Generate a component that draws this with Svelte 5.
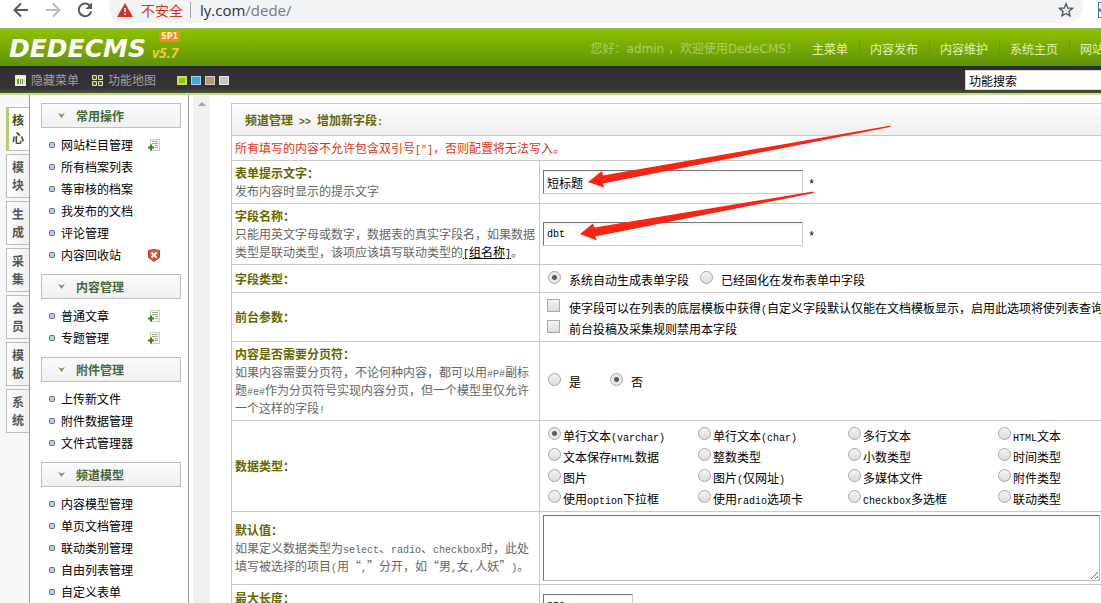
<script>
  const nav = ['主菜单', '内容发布', '内容维护', '系统主页', '网站主页'];
  const tabs = ['核心', '模块', '生成', '采集', '会员', '模板', '系统'];
  const swatches = ['#8fc31f', '#3fa9dc', '#b29a78', '#c4c8cc'];
  const groups = [
    {
      title: '常用操作',
      items: [
        { text: '网站栏目管理', icon: 'add' },
        { text: '所有档案列表' },
        { text: '等审核的档案' },
        { text: '我发布的文档' },
        { text: '评论管理' },
        { text: '内容回收站', icon: 'bin' }
      ]
    },
    {
      title: '内容管理',
      items: [
        { text: '普通文章', icon: 'add' },
        { text: '专题管理', icon: 'add' }
      ]
    },
    {
      title: '附件管理',
      items: [{ text: '上传新文件' }, { text: '附件数据管理' }, { text: '文件式管理器' }]
    },
    {
      title: '频道模型',
      items: [
        { text: '内容模型管理' },
        { text: '单页文档管理' },
        { text: '联动类别管理' },
        { text: '自由列表管理' },
        { text: '自定义表单' }
      ]
    }
  ];
  const dataTypes = [
    '单行文本(varchar)', '单行文本(char)', '多行文本', 'HTML文本',
    '文本保存HTML数据', '整数类型', '小数类型', '时间类型',
    '图片', '图片(仅网址)', '多媒体文件', '附件类型',
    '使用option下拉框', '使用radio选项卡', 'Checkbox多选框', '联动类型'
  ];
  let dataType = $state(0);

  // Latin runs are set in a half-width face beside the full-width characters.
  const runs = (text) =>
    (text.match(/[\x20-\x7e]+|[^\x20-\x7e]+/g) ?? []).map((t) => ({ t, latin: /^[\x20-\x7e]/.test(t) }));
</script>

{#snippet mixed(text)}{#each runs(text) as r}{#if r.latin}<span class="latin">{r.t}</span>{:else}{r.t}{/if}{/each}{/snippet}

<div class="page">
  <div class="browser">
    <button class="tool" aria-label="后退">
      <svg width="16" height="16" viewBox="0 0 16 16"><path d="M15 8H2M8 1.5L1.5 8L8 14.5" fill="none" stroke="#55585c" stroke-width="2" /></svg>
    </button>
    <button class="tool" aria-label="前进">
      <svg width="16" height="16" viewBox="0 0 16 16"><path d="M1 8H14M8 1.5L14.5 8L8 14.5" fill="none" stroke="#b9bbbe" stroke-width="2" /></svg>
    </button>
    <button class="tool" aria-label="刷新">
      <svg width="16" height="16" viewBox="0 0 16 16"><path d="M12.6 3.4A6.3 6.3 0 1 0 14.2 9.5" fill="none" stroke="#55585c" stroke-width="2" /><path d="M15 0.5V7H8.5Z" fill="#55585c" /></svg>
    </button>
    <div class="address">
      <svg width="16" height="14" viewBox="0 0 16 14"><path d="M8 0L16 14H0Z" fill="#d93025" /><path d="M7.2 5h1.6v4H7.2zM7.2 10.4h1.6V12H7.2z" fill="#fff" /></svg>
      <span class="unsafe">不安全</span>
      <span class="bar"></span>
      <span class="url">ly.com<span>/dede/</span></span>
      <svg class="star" width="16" height="16" viewBox="0 0 16 16"><path d="M8 1.8l1.8 4.2 4.6.4-3.5 3 1.1 4.5L8 11.5l-4 2.4 1.1-4.5-3.5-3 4.6-.4z" fill="none" stroke="#55585c" stroke-width="1.4" /></svg>
    </div>
    <svg class="ext" width="16" height="16" viewBox="0 0 16 16"><rect x="0.5" y="0.5" width="15" height="15" fill="#fff" stroke="#3a6ea5" /><path d="M1 7l5 5 7-8" fill="none" stroke="#3a6ea5" stroke-width="2" /></svg>
  </div>

  <header>
    <div class="logo">
      <span class="brand">DEDECMS</span>
      <span class="version">v5.7<span class="sp">SP1</span></span>
    </div>
    <div class="hello">您好：admin ，欢迎使用DedeCMS！</div>
    <nav>
      {#each nav as n}<a href="#top">{n}</a>{/each}
    </nav>
  </header>

  <div class="toolbar">
    <a href="#hide">
      <svg width="11" height="11" viewBox="0 0 11 11"><rect width="11" height="11" fill="#e4ecd2" /><path d="M1 2.5h9" stroke="#fff" /><path d="M2 4h2v5H2z" fill="#6c9a1c" /><path d="M5.5 4v5M7.5 4v5" stroke="#7c8a62" /></svg>
      隐藏菜单
    </a>
    <a href="#map">
      <svg width="11" height="11" viewBox="0 0 11 11"><path d="M.5 .5h4v4h-4zM6.500 .5h4v4h-4zM.5 6.500h4v4h-4zM6.500 6.500h4v4h-4z" fill="#4c6420" stroke="#dcebb4" /></svg>
      功能地图
    </a>
    <div class="swatches">
      {#each swatches as c, i}<button aria-label="配色{i + 1}" class:on={i === 0} style:background-color={c}></button>{/each}
    </div>
    <input class="search" aria-label="功能搜索" value="功能搜索" />
  </div>

  <div class="body">
    <div class="tabs">
      {#each tabs as t, i}
        <button class:active={i === 0}><span>{t}</span></button>
      {/each}
    </div>
    <aside>
      {#each groups as g}
        <section>
          <h2>
            <svg width="7" height="5" viewBox="0 0 7 5"><path d="M0 0l3.5 1.6L7 0L3.5 5Z" fill="#6f9c62" /></svg>
            {g.title}
          </h2>
          <ul>
            {#each g.items as item}
              <li>
                <svg width="6" height="6" viewBox="0 0 6 6"><rect x="0.5" y="0.5" width="5" height="5" rx="1" fill="#b9cdea" stroke="#56698f" /></svg>
                <a href="#item">{item.text}</a>
                {#if item.icon === 'add'}
                  <svg class="mark" width="12" height="12" viewBox="0 0 12 12"><rect x="2.5" y="0.5" width="9" height="11" fill="#f3f7ee" stroke="#c6d3ba" /><path d="M4 2.5h6M4 4.500h6M7 6.500h3M7 8.500h3" stroke="#9db38e" /><path d="M3 5.500v6M0 8.500h6" stroke="#3f7a2c" stroke-width="2" /></svg>
                {:else if item.icon === 'bin'}
                  <svg class="mark" width="12" height="13" viewBox="0 0 12 13"><path d="M.5 1.500L6 .5l5.500 1v7L6 12.500.5 8.500Z" fill="#d9553d" stroke="#b5402c" /><path d="M3.500 3.500l5 5M8.500 3.500l-5 5" stroke="#fff" stroke-width="2" /></svg>
                {/if}
              </li>
            {/each}
          </ul>
        </section>
      {/each}
    </aside>
    <div class="scroll">
      <svg width="8" height="4" viewBox="0 0 8 4"><path d="M4 0L8 4H0Z" fill="#a3a3a3" /></svg>
    </div>

    <main>
      <form onsubmit={(e) => e.preventDefault()}>
        <table>
          <tbody>
            <tr class="title"><th colspan="2">{@render mixed('频道管理 >> 增加新字段:')}</th></tr>
            <tr class="warn"><td colspan="2">{@render mixed('所有填写的内容不允许包含双引号["]，否则配置将无法写入。')}</td></tr>
            <tr>
              <td class="label"><label for="tip">表单提示文字：</label><p>发布内容时显示的提示文字</p></td>
              <td><div class="field"><input id="tip" class="text" value="短标题" /><span class="required">*</span></div></td>
            </tr>
            <tr class="name">
              <td class="label"><label for="fieldname">字段名称：</label><p>只能用英文字母或数字，数据表的真实字段名，如果数据类型是联动类型，该项应该填写联动类型的<a href="#group">{@render mixed('[组名称]')}</a>。</p></td>
              <td><div class="field"><input id="fieldname" class="text latin" value="dbt" /><span class="required">*</span></div></td>
            </tr>
            <tr class="kind">
              <td class="label"><b>字段类型：</b></td>
              <td>
                <div class="options">
                  <label><input type="radio" name="kind" checked />系统自动生成表单字段</label>
                  <label><input type="radio" name="kind" />已经固化在发布表单中字段</label>
                </div>
              </td>
            </tr>
            <tr class="front">
              <td class="label"><b>前台参数：</b></td>
              <td>
                <div class="options stack">
                  <label><input type="checkbox" /><span>{@render mixed('使字段可以在列表的底层模板中获得(自定义字段默认仅能在文档模板显示，启用此选项将使列表查询变慢)')}</span></label>
                  <label><input type="checkbox" />前台投稿及采集规则禁用本字段</label>
                </div>
              </td>
            </tr>
            <tr class="paging">
              <td class="label"><b>内容是否需要分页符：</b><p>{@render mixed('如果内容需要分页符，不论何种内容，都可以用#P#副标题#e#作为分页符号实现内容分页，但一个模型里仅允许一个这样的字段!')}</p></td>
              <td>
                <div class="options wide">
                  <label><input type="radio" name="paging" />是</label>
                  <label><input type="radio" name="paging" checked />否</label>
                </div>
              </td>
            </tr>
            <tr class="types">
              <td class="label"><b>数据类型：</b></td>
              <td>
                <div class="grid">
                  {#each dataTypes as t, i}
                    <label><input type="radio" name="datatype" value={i} bind:group={dataType} /><span>{@render mixed(t)}</span></label>
                  {/each}
                </div>
              </td>
            </tr>
            <tr class="default">
              <td class="label"><label for="default">默认值：</label><p>{@render mixed('如果定义数据类型为select、radio、checkbox时，此处填写被选择的项目(用“,”分开，如“男,女,人妖”)。')}</p></td>
              <td><textarea id="default"></textarea></td>
            </tr>
            <tr class="length">
              <td class="label"><label for="max">最大长度：</label></td>
              <td><input id="max" class="text short latin" value="250" /></td>
            </tr>
          </tbody>
        </table>
        <svg class="arrows" width="320" height="130" viewBox="575 115 320 130" aria-hidden="true">
          <path d="M588 182L602 171L603 175.500L891 125.500L890 127L603 183.500L604 187.500Z" fill="#fb2312" />
          <path d="M580 234L593 223.500L594.500 227.500L813 191.500L814 193L595 236.500L597 240.500Z" fill="#fb2312" />
        </svg>
      </form>
    </main>
  </div>
</div>

<style>
  :global(body) {
    margin: 0;
    background: #fff;
  }
  .page {
    height: 100vh;
    overflow: hidden;
    display: flex;
    flex-direction: column;
    font: 12px/18px "Noto Sans CJK SC", sans-serif;
    color: #000;
    text-spacing-trim: space-all;
  }
  button {
    padding: 0;
    border: 0;
    background: none;
    font: inherit;
  }
  a {
    color: inherit;
    text-decoration: none;
  }
  .latin {
    font: 10px/12px "Liberation Mono", monospace;
  }
  th .latin {
    font-weight: bold;
  }

  .browser {
    flex: none;
    display: flex;
    height: 28px;
    overflow: hidden;
    padding-left: 13px;
    gap: 16px;
  }
  .tool {
    height: 20px;
    width: 16px;
  }
  .tool svg {
    display: block;
    margin: auto;
  }
  .address {
    flex: 1;
    display: flex;
    align-items: center;
    height: 20px;
    padding: 0 9px 3px 8px;
    border-radius: 0 0 16px 16px;
    background: #f1f3f4;
  }
  .unsafe {
    margin-left: 8px;
    font-size: 14px;
    color: #d93025;
  }
  .bar {
    width: 1px;
    height: 16px;
    margin: 0 9px 0 7px;
    background: #9aa0a6;
  }
  .url {
    font: 15px/20px "Open Sans", sans-serif;
    color: #303236;
  }
  .url span {
    color: #75797e;
  }
  .star {
    margin-left: auto;
  }
  .ext {
    flex: none;
    margin: 2px -13px 0 -1px;
  }

  header {
    flex: none;
    display: flex;
    align-items: center;
    height: 37px;
    border-top: 1px solid #9dbb60;
    background: linear-gradient(#8fc000, #5f930a);
    color: #e1f2b8;
  }
  .logo {
    display: flex;
    align-items: center;
    gap: 6px;
    padding: 3px 0 0 9px;
  }
  .brand {
    font: italic bold 25px/32px "DejaVu Sans", sans-serif;
    color: #fff;
  }
  .version {
    position: relative;
    padding-top: 8px;
    font: italic bold 14px/18px "Open Sans", sans-serif;
    color: #f2c838;
  }
  .sp {
    position: absolute;
    left: 7px;
    top: -4px;
    padding: 0 2px;
    border-radius: 1px;
    background: #ee8a22;
    color: #fff2c4;
    font: bold 8px/10px "DejaVu Sans", sans-serif;
  }
  .hello {
    flex: 1;
    padding-top: 3px;
    text-align: right;
    white-space: nowrap;
    font-family: "DejaVu Sans", "Noto Sans CJK SC", sans-serif;
    color: #abcf6a;
  }
  nav {
    flex: none;
    display: flex;
    margin: 3px -38px 0 4px;
  }
  nav a {
    padding: 0 11px 0 10px;
  }
  nav a + a {
    border-left: 1px solid #6a9a1a;
  }

  .toolbar {
    flex: none;
    display: flex;
    align-items: center;
    height: 22px;
    padding: 3px 0 2px 15px;
    border-bottom: 2px solid #c9de92;
    background: linear-gradient(#262a24, #323036 4px, #363236 22px, #4a5630);
    color: #a0a0a0;
  }
  .toolbar a {
    display: flex;
    align-items: center;
    gap: 5px;
    margin-right: 13px;
  }
  .swatches {
    display: flex;
    gap: 4px;
    margin-left: 8px;
  }
  .swatches button {
    width: 10px;
    height: 9px;
    box-sizing: border-box;
    border: 1px solid rgba(255, 255, 255, 0.5);
  }
  .swatches .on {
    border: 2px solid #c0e450;
  }
  .search {
    width: 160px;
    height: 20px;
    box-sizing: border-box;
    margin: 0 -24px 0 auto;
    padding: 0 3px;
    border: 1px solid #d8d4d0;
    background: #fff;
    font: inherit;
  }

  .body {
    flex: 1;
    min-height: 0;
    display: flex;
    overflow: hidden;
  }
  .tabs {
    flex: none;
    display: flex;
    flex-direction: column;
    gap: 3px;
    width: 23px;
    padding: 12px 0 0 6px;
    background: #f7f7f7;
  }
  .tabs button {
    height: 44px;
    padding-left: 5px;
    border: 1px solid #bdbdbd;
    border-right: 0;
    background: linear-gradient(90deg, #fff, #efefef);
    color: #555;
    font-weight: bold;
    text-align: left;
  }
  .tabs span {
    display: block;
    width: 12px;
  }
  .tabs .active {
    padding-left: 3px;
    border-left: 3px solid #b2cf72;
    background: #fff;
    color: #3c5216;
  }
  aside {
    flex: none;
    width: 140px;
    padding: 8px 7px 0 11px;
    border: solid #9aa0a0;
    border-width: 0 1px;
  }
  h2 {
    display: flex;
    align-items: center;
    gap: 11px;
    height: 23px;
    margin: 0;
    padding-left: 16px;
    border: 1px solid #bfbfbf;
    background: linear-gradient(#fbfbfb, #f0f0f0);
    font-size: 12px;
    color: #46673a;
  }
  ul {
    list-style: none;
    margin: 0;
    padding: 6px 0 8px;
  }
  li {
    display: flex;
    align-items: center;
    gap: 6px;
    height: 22px;
    padding: 0 21px 0 8px;
  }
  .mark {
    margin-left: auto;
  }
  .scroll {
    flex: none;
    display: flex;
    justify-content: center;
    width: 17px;
    margin: 0 21px 0 4px;
    padding-top: 7px;
    background: #f1f1f1;
  }

  main {
    flex: 1;
    min-width: 0;
    padding-top: 8px;
  }
  form {
    position: relative;
  }
  table {
    width: 100%;
    border-collapse: collapse;
  }
  th,
  td {
    padding: 0 3px;
    border: 1px solid #c9c9c9;
  }
  tr {
    height: 43px;
  }
  .title {
    height: 32px;
    background: linear-gradient(#fefefe, #eee);
  }
  .title th {
    padding-left: 13px;
    text-align: left;
    color: #666600;
  }
  .warn {
    height: 25px;
    color: #e8340c;
  }
  .name {
    height: 61px;
  }
  .kind {
    height: 28px;
  }
  .front {
    height: 49px;
  }
  .paging {
    height: 79px;
  }
  .types {
    height: 91px;
  }
  .default {
    height: 73px;
  }
  .label {
    width: 301px;
    min-width: 301px;
    color: #666;
  }
  .label label,
  .label b {
    display: block;
    font-weight: bold;
    color: #666600;
  }
  .label p {
    margin: 0;
  }
  .label a {
    color: #000;
    text-decoration: underline;
  }
  .length td {
    vertical-align: top;
    padding-top: 4px;
  }
  .length td + td {
    padding-top: 9px;
  }
  .field {
    display: flex;
    align-items: center;
    gap: 5px;
  }
  .required {
    padding-top: 6px;
    font-family: "Liberation Mono", monospace;
  }
  .text {
    width: 260px;
    height: 24px;
    box-sizing: border-box;
    margin: 0;
    padding: 0 3px;
    border: 1px solid #ccc;
    border-top-color: #767676;
    border-left-color: #767676;
    background: linear-gradient(#f3f3f3, #fff 4px);
    color: #000;
  }
  .text:not(.latin) {
    font: inherit;
  }
  .short {
    display: block;
    width: 90px;
  }
  textarea {
    display: block;
    width: 557px;
    height: 66px;
    box-sizing: border-box;
    border: 1px solid #bbb;
    border-top-color: #767676;
    border-left-color: #767676;
    background: linear-gradient(#f3f3f3, #fff 4px);
    font: inherit;
  }
  .options {
    display: flex;
    gap: 11px;
    padding: 2px 0 0 5px;
  }
  .stack {
    flex-direction: column;
    gap: 3px;
    padding-left: 4px;
  }
  .wide {
    gap: 29px;
  }
  .options label {
    display: flex;
    align-items: center;
    gap: 8px;
    white-space: nowrap;
  }
  .stack label {
    gap: 9px;
  }
  .grid {
    display: grid;
    grid-template-columns: repeat(4, 150px);
    row-gap: 3px;
    padding: 2px 0 0 5px;
  }
  .grid label {
    display: flex;
    align-items: center;
    gap: 2px;
    white-space: nowrap;
  }
  input[type='radio'],
  input[type='checkbox'] {
    appearance: none;
    flex: none;
    width: 13px;
    height: 13px;
    box-sizing: border-box;
    margin: 0 0 5px;
    border: 1px solid #a9a9a9;
    background: linear-gradient(#f4f4f4, #dcdcdc);
  }
  input[type='radio'] {
    border-radius: 50%;
  }
  input[type='radio']:checked {
    background: radial-gradient(circle, #5a5a5a 2px, #e8e8e8 3px);
  }
  .arrows {
    position: absolute;
    left: 344px;
    top: 12px;
    pointer-events: none;
  }
</style>
